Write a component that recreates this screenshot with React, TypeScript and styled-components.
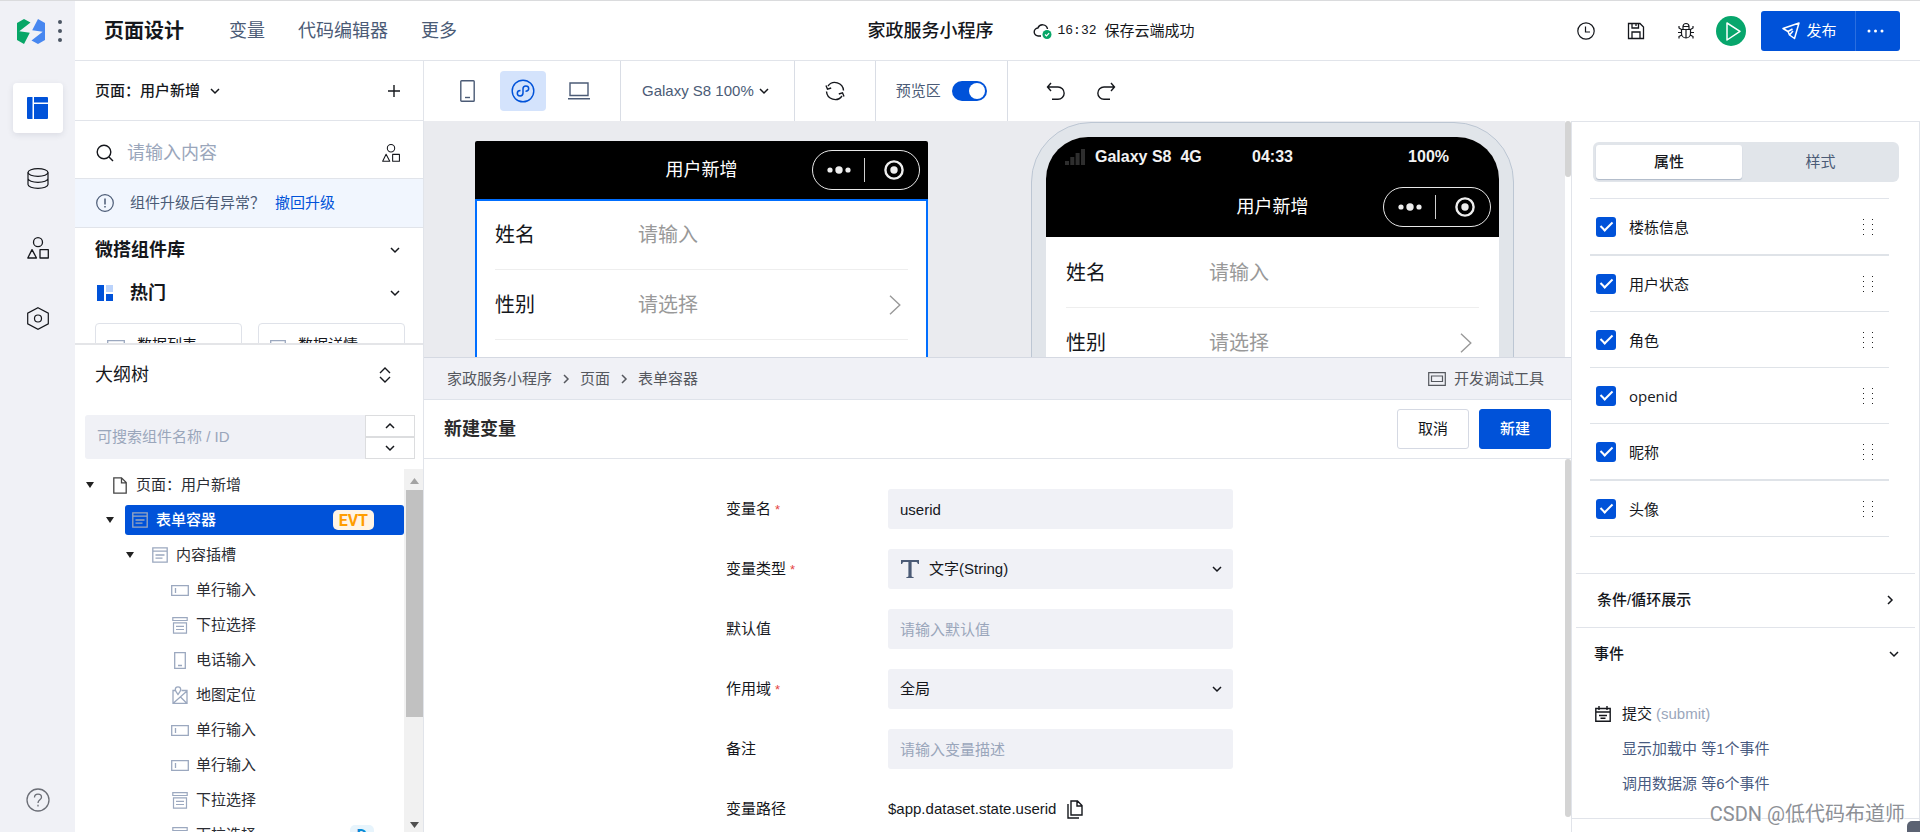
import React from "react";
import styled, { createGlobalStyle, css } from "styled-components";

const color = {
  primary: "#0052d9",
  ink: "#15171c",
  slate: "#4b5b76",
  muted: "#9aa6bb",
  line: "#e1e4ea",
  fill: "#f0f1f6",
  canvas: "#eaebef",
};

const GlobalStyle = createGlobalStyle`
  *, *::before, *::after { box-sizing: border-box; }
  html, body, #root { height: 100%; margin: 0; }
  body {
    font-family: "Liberation Sans", "Noto Sans CJK SC", sans-serif;
    font-size: 15px;
    line-height: 20px;
    color: ${color.ink};
    background: #fff;
    overflow: hidden;
  }
  button, input, select { font: inherit; color: inherit; margin: 0; }
  button { padding: 0; border: 0; background: none; cursor: pointer; }
  a { text-decoration: none; }
  ul { list-style: none; margin: 0; padding: 0; }
  h1, h2, h3, p { margin: 0; font: inherit; }
  svg { display: block; flex: none; }
`;

/* ---------- icons ---------- */

type IconProps = { w?: number; h?: number; box?: string; sw?: number; stroke?: string; children: React.ReactNode };
const Icon = ({ w = 18, h = w, box, sw = 1, stroke = "currentColor", children }: IconProps) => (
  <svg width={w} height={h} viewBox={box ?? `0 0 ${w} ${h}`} fill="none" stroke={stroke} strokeWidth={sw} aria-hidden="true">
    {children}
  </svg>
);

const chevronPaths = {
  down: "M2 4l4 4 4-4",
  up: "M2 8l4-4 4 4",
  right: "M4 2l4 4-4 4",
};
const Chevron = ({ dir = "down" }: { dir?: keyof typeof chevronPaths }) => (
  <Icon w={12} sw={1.5}><path d={chevronPaths[dir]} /></Icon>
);

const LogoIcon = () => (
  <svg width="28" height="25" viewBox="0 0 28 25" aria-hidden="true">
    <path d="M0 4L7 0l6.500 3.600L2.300 12.200 12.800 13.800 7 25 0 21z" fill="#07a667" />
    <path d="M28 21L21 25l-6.500-3.600L25.700 12.800 15.200 11.200 21 0l7 4z" fill="#4787f0" />
  </svg>
);
const LayoutIcon = () => (
  <svg width="21" height="22" viewBox="0 0 21 22" fill={color.primary} aria-hidden="true">
    <path d="M1 0h4.500v22H1a1 1 0 01-1-1V1a1 1 0 011-1zM7 0h13a1 1 0 011 1v4.500H7zM7 7h14v14a1 1 0 01-1 1H7z" />
  </svg>
);
const DatabaseIcon = () => (
  <Icon w={22} h={21} sw={1.2}>
    <ellipse cx="11" cy="4.500" rx="10" ry="3.800" />
    <path d="M1 4.500v12C1 18.600 5.500 20.300 11 20.300s10-1.700 10-3.800v-12M1 10.500c0 2.100 4.500 3.800 10 3.800s10-1.700 10-3.800" />
  </Icon>
);
const ShapesIcon = ({ size = 22 }: { size?: number }) => (
  <Icon w={size} box="0 0 22 22" sw={1.3}>
    <circle cx="11" cy="5.200" r="4.500" />
    <path d="M5 12.600L9.500 21H.8zM13 12.700h8.300V21H13z" strokeLinejoin="round" />
  </Icon>
);
const HexIcon = () => (
  <Icon w={22} h={23} sw={1.2}>
    <path d="M11 .8l10.300 5.400v10.600L11 22.200.7 16.800V6.200z" />
    <circle cx="11" cy="11.500" r="3.500" />
  </Icon>
);
const HelpIcon = () => (
  <Icon w={24} sw={1.3} stroke="#6b6e76">
    <circle cx="12" cy="12" r="11" />
    <path d="M8.500 9.500c0-2 1.500-3.300 3.500-3.300s3.500 1.300 3.500 3.100c0 2.500-3.500 2.700-3.500 5.700M12 16.800v1.700" />
  </Icon>
);
const SearchIcon = () => <Icon w={18} sw={1.4}><circle cx="8" cy="8" r="6.800" /><path d="M13 13l4 4" /></Icon>;
const PlusIcon = () => <Icon w={12} sw={1.4}><path d="M6 0v12M0 6h12" /></Icon>;
const InfoIcon = () => <Icon w={18} sw={1.2}><circle cx="9" cy="9" r="8.300" /><path d="M9 4.500v6M9 12v1.600" strokeWidth="1.500" /></Icon>;
const HotIcon = () => (
  <svg width="16" height="16" viewBox="0 0 16 16" aria-hidden="true">
    <path d="M0 0h7v16H0zM9 9h7v7H9z" fill={color.primary} /><path d="M9 0h7v7H9z" fill="#bbd3fb" />
  </svg>
);
const SortIcon = () => <Icon w={12} h={16} sw={1.4}><path d="M1 6l5-5 5 5M1 10l5 5 5-5" /></Icon>;
const CloudIcon = () => (
  <Icon w={20} h={18} sw={1.4}>
    <path d="M8 14H5.500a4 4 0 01-.6-8A5 5 0 0114.500 7" />
    <circle cx="14" cy="12.500" r="4.500" fill="#07a667" stroke="none" />
    <path d="M12 12.500l1.500 1.500 2.600-2.800" stroke="#fff" strokeWidth="1.200" />
  </Icon>
);
const ClockIcon = () => <Icon w={18} sw={1.2}><circle cx="9" cy="9" r="8.200" /><path d="M8.500 4.500V10H13" /></Icon>;
const SaveIcon = () => <Icon w={18} sw={1.3}><path d="M1.500 1.500H13L16.500 5v11.500h-15zM5 1.500V6h6.500V1.500M5 16.500V10h8v6.500M9 2v2" /></Icon>;
const BugIcon = () => (
  <Icon w={18} sw={1.2}>
    <path d="M4.500 7.500h9v4a4.500 4.500 0 01-9 0zM9 7.500V16M6 7V4.500a3 3 0 016 0V7M5.500 4.500h7M2 4v2l2.500 1.500M16 4v2l-2.500 1.500M1 10.500h3.500M17 10.500h-3.500M2 16.500v-2L4.700 13M16 16.500v-2L13.300 13" />
  </Icon>
);
const PlayIcon = () => <Icon w={30} sw={1.5} stroke="#fff"><path d="M11 7l13 8.300L11 24z" strokeLinejoin="round" /></Icon>;
const SendIcon = () => <Icon w={18} sw={1.5}><path d="M1 6.500L17 1l-4.500 15.500-5-3.500-1.500-3.500zM6 9.500l4.500-2.500M7.500 13L11 9" strokeLinejoin="round" /></Icon>;
const MoreIcon = () => (
  <svg width="17" height="4" viewBox="0 0 17 4" fill="currentColor" aria-hidden="true">
    <circle cx="2" cy="2" r="1.500" /><circle cx="8.500" cy="2" r="1.500" /><circle cx="15" cy="2" r="1.500" />
  </svg>
);
const PhoneIcon = () => <Icon w={15} h={22} sw={1.4}><rect x=".8" y=".8" width="13.400" height="20.400" rx=".8" /><path d="M5 17.500h5" /></Icon>;
const MiniIcon = () => (
  <Icon w={24} sw={1.4}>
    <circle cx="12" cy="12" r="10.800" />
    <path d="M9.500 11.500c-1.800 0-3.200 1.100-3.200 2.700 0 1.500 1.200 2.700 2.800 2.700 1.700 0 2.900-1.300 2.900-2.900V9.800c0-1.600 1.200-2.900 2.900-2.900 1.600 0 2.800 1.200 2.800 2.700 0 1.600-1.400 2.700-3.200 2.700" strokeWidth="1.500" />
  </Icon>
);
const LaptopIcon = () => <Icon w={22} h={18} sw={1.4}><path d="M2 1h18v12.500H2zM0 16.700h22" /></Icon>;
const RefreshIcon = () => (
  <Icon w={20} sw={1.4}>
    <path d="M3 5A8.600 8.600 0 0118.500 9.500M17 15A8.600 8.600 0 011.500 10.500M1 4.500l1.500 3.700 3.700-1.200M19 15.500l-1.500-3.700-3.700 1.200" />
  </Icon>
);
const UndoIcon = () => <Icon w={19} sw={1.4}><path d="M5 1L1.500 5 5 9M1.500 5H12a6 6 0 010 12.300H6" /></Icon>;
const RedoIcon = () => <Icon w={19} sw={1.4}><path d="M14 1l3.500 4L14 9M17.500 5H7a6 6 0 000 12.300h6" /></Icon>;
const BigChevron = () => <Icon w={12} h={20} sw={1.4} stroke="#999"><path d="M1 .8l9.800 9.200L1 19.200" /></Icon>;
const SignalIcon = () => (
  <svg width="20" height="16" viewBox="0 0 20 16" fill="#2e2e2e" aria-hidden="true">
    <path d="M0 12h4v4H0zM5.300 8h4v8h-4zM10.600 4h4v12h-4zM16 0h4v16h-4z" />
  </svg>
);
const DevIcon = () => <Icon w={18} h={14} sw={1.2}><path d="M.7.7h16.600v12.600H.7zM3.500 4h11v5.500h-11z" /></Icon>;
const TypeIcon = () => (
  <svg width="18" height="18" viewBox="0 0 18 18" fill={color.slate} aria-hidden="true">
    <path d="M0 0h18v4h-1.200c-.2-1.400-.8-2-2.300-2H10.600v14c0 .8.600 1 2 1v1H5.400v-1c1.400 0 2-.2 2-1V2H3.500C2 2 1.400 2.600 1.200 4H0z" />
  </svg>
);
const CopyIcon = () => <Icon w={16} h={19} sw={1.4}><path d="M4 1h6.500L15 5.500V15H4zM10 1v5h5M1 4v14h11" /></Icon>;
const SubmitIcon = () => <Icon w={16} sw={1.4}><path d="M.8 2.500h14.400v12.800H.8zM4 0v4M12 0v4M.8 6h14.400M4 9.500h8M5.500 12.300h5" /></Icon>;
const CaretIcon = () => (
  <svg width="8" height="6" viewBox="0 0 8 6" aria-hidden="true"><path d="M0 0h8L4 6z" fill="#222" /></svg>
);

const treeIcons = {
  page: <Icon w={14} h={17} sw={1.3} stroke="#444"><path d="M.8.8h7.700l4.700 4.700v10.700H.8zM8.500.8v5h4.700" /></Icon>,
  form: <Icon w={16} sw={1.3} stroke="#9ba8bf"><path d="M.8.8h14.400v14.400H.8zM.8 4.200h14.400M3.500 8h9M3.500 11.200h7" /></Icon>,
  input: <Icon w={18} h={11} sw={1.3} stroke="#9ba8bf"><path d="M.7.7h16.600v9.600H.7zM4.500 3v5" /></Icon>,
  select: <Icon w={16} h={17} sw={1.2} stroke="#9ba8bf"><path d="M.8.7h14.400v2.800H.8zM1.500 5.800h13v10.400h-13zM4 9.300h8M4 12.500h8" /></Icon>,
  tel: <Icon w={12} h={17} sw={1.3} stroke="#9ba8bf"><path d="M.7.7h10.600v15.600H.7zM4 13.500h4" /></Icon>,
  map: <Icon w={16} h={18} sw={1.3} stroke="#9ba8bf"><path d="M3 4.500H1v12.800h14V4.500H9.500M1.500 17L15 5M8.500 11l6 6M6 8.500C4.500 6.500 3.300 5.200 3.300 3.600a2.700 2.700 0 015.400 0C8.700 5.200 7.500 6.500 6 8.500z" /></Icon>,
};

/* ---------- shell ---------- */

const Shell = styled.div`
  display: flex;
  height: 100vh;
  border-top: 1px solid #dadbdd;
  overflow: hidden;
`;
const Rail = styled.nav`
  flex: 0 0 75px;
  display: flex;
  flex-direction: column;
  align-items: center;
  background: ${color.fill};
  padding-bottom: 20px;
`;
const Brand = styled.div`
  display: flex;
  align-items: center;
  gap: 13px;
  height: 60px;
  margin-bottom: 22px;
  padding-left: 4px;
`;
const BrandDots = styled.button`
  display: grid;
  gap: 5px;
  i { display: block; width: 4px; height: 4px; border-radius: 50%; background: #4b5563; }
`;
const RailButton = styled.button<{ $active?: boolean }>`
  display: grid;
  place-items: center;
  width: 50px;
  height: 50px;
  margin-bottom: 20px;
  border-radius: 4px;
  ${(p) => p.$active && css`background: #fff; box-shadow: 0 2px 6px rgba(30, 40, 70, 0.1);`}
`;
const Spacer = styled.div`flex: 1;`;
const Main = styled.div`
  flex: 1;
  min-width: 0;
  display: flex;
  flex-direction: column;
`;
const Header = styled.header`
  flex: 0 0 60px;
  display: flex;
  align-items: center;
  justify-content: space-between;
  padding: 0 20px 0 29px;
  border-bottom: 1px solid ${color.line};
`;
const TopNav = styled.nav`
  display: flex;
  align-items: center;
  gap: 33px;
  font-size: 18px;
`;
const PageTitle = styled.h1`
  font-size: 20px;
  font-weight: 700;
  margin-right: 12px;
`;
const NavLink = styled.a`color: ${color.slate};`;
const AppInfo = styled.div`
  display: flex;
  align-items: center;
  gap: 40px;
  padding-left: 28px;
`;
const AppName = styled.h2`
  font-size: 18px;
  font-weight: 500;
`;
const SaveState = styled.p`
  display: flex;
  align-items: center;
  gap: 4px;
  time { font-family: "Liberation Mono", monospace; font-size: 13px; margin-right: 4px; }
`;
const Actions = styled.div`
  display: flex;
  align-items: center;
  gap: 32px;
`;
const IconButton = styled.button`
  display: grid;
  place-items: center;
`;
const RunButton = styled(IconButton)`
  width: 30px;
  height: 30px;
  margin: 0 -17px 0 -11px;
  border-radius: 50%;
  background: #07a66c;
`;
const Publish = styled.div`
  display: flex;
  height: 40px;
  border-radius: 3px;
  background: ${color.primary};
  color: #fff;
  overflow: hidden;
`;
const PublishMain = styled.button`
  display: flex;
  align-items: center;
  justify-content: center;
  gap: 6px;
  width: 94px;
  padding-left: 3px;
`;
const PublishMore = styled.button`
  display: grid;
  place-items: center;
  width: 45px;
  padding-right: 6px;
  border-left: 1px solid #2a6ee0;
`;
const Body = styled.div`
  flex: 1;
  min-height: 0;
  display: flex;
`;

/* ---------- left panel ---------- */

const LeftPanel = styled.aside`
  flex: 0 0 349px;
  display: flex;
  flex-direction: column;
  min-height: 0;
  border-right: 1px solid ${color.line};
`;
const PageBar = styled.div`
  flex: 0 0 60px;
  display: flex;
  align-items: center;
  justify-content: space-between;
  padding: 0 23px 0 20px;
  border-bottom: 1px solid ${color.line};
`;
const SearchBar = styled(PageBar)`
  flex-basis: 58px;
  padding-top: 6px;
`;
const PagePicker = styled.button`
  display: flex;
  align-items: center;
  gap: 9px;
  font-weight: 500;
`;
const SearchLabel = styled.label`
  display: flex;
  align-items: center;
  gap: 13px;
  padding-left: 1px;
`;
const SearchInput = styled.input`
  width: 200px;
  padding: 0;
  border: 0;
  outline: 0;
  background: none;
  font-size: 18px;
  &::placeholder { color: ${color.muted}; opacity: 1; }
`;
const Notice = styled.p`
  flex: 0 0 49px;
  display: flex;
  align-items: center;
  padding-left: 21px;
  background: #f1f6fe;
  border-bottom: 1px solid ${color.line};
  color: ${color.slate};
  span { margin: 0 10px 0 16px; }
  a { color: ${color.primary}; }
`;
const Library = styled.section`
  flex: 0 0 117px;
  padding: 0 18px 0 20px;
  border-bottom: 2px solid #e4e5e8;
  overflow: hidden;
`;
const LibraryHead = styled.button`
  display: flex;
  align-items: center;
  justify-content: space-between;
  width: 100%;
  height: 43px;
  padding-right: 4px;
  font-size: 18px;
  font-weight: 700;
  span { display: flex; align-items: center; gap: 17px; padding-left: 2px; }
`;
const CardGrid = styled.div`
  display: grid;
  grid-template-columns: 1fr 1fr;
  gap: 16px;
  margin-top: 9px;
`;
const Card = styled.button`
  display: flex;
  align-items: center;
  gap: 12px;
  height: 44px;
  padding-left: 11px;
  border: 1px solid #dfe2e9;
  border-radius: 4px;
`;
const Outline = styled.section`
  flex: 1;
  min-height: 0;
  display: flex;
  flex-direction: column;
`;
const OutlineHead = styled.div`
  flex: 0 0 60px;
  display: flex;
  align-items: center;
  justify-content: space-between;
  padding: 0 32px 0 20px;
  font-size: 18px;
`;
const Finder = styled.div`
  flex: 0 0 44px;
  display: flex;
  margin: 10px 8px 10px 10px;
`;
const FinderInput = styled.input`
  flex: 1;
  min-width: 0;
  padding: 0 12px;
  border: 0;
  border-radius: 3px 0 0 3px;
  background: ${color.fill};
  outline: 0;
  &::placeholder { color: ${color.muted}; opacity: 1; }
`;
const Stepper = styled.div`
  flex: 0 0 50px;
  display: grid;
  grid-template-rows: 1fr 1fr;
`;
const StepButton = styled.button`
  display: grid;
  place-items: center;
  border: 1px solid #dcdddf;
`;
const TreeArea = styled.div`
  flex: 1;
  min-height: 0;
  display: flex;
  overflow: hidden;
`;
const Tree = styled.ul`
  flex: 1;
  display: flex;
  flex-direction: column;
  gap: 5px;
  padding-top: 1px;
`;
const TreeRow = styled.li<{ $depth: number }>`
  flex: 0 0 30px;
  display: flex;
  align-items: center;
  padding-left: ${(p) => 11 + p.$depth * 20}px;
  color: #2b2d33;
`;
const Twist = styled.span`
  width: 8px;
  margin-right: 11px;
`;
const Node = styled.span<{ $selected?: boolean }>`
  flex: 1;
  display: flex;
  align-items: center;
  height: 30px;
  padding: 0 30px 0 3px;
  border-radius: 3px;
  ${(p) => p.$selected && css`background: ${color.primary}; color: #fff; font-weight: 500;`}
`;
const NodeIcon = styled.span`
  display: grid;
  place-items: center;
  width: 24px;
  margin-right: 4px;
`;
const Badge = styled.b<{ $tone: "evt" | "data" }>`
  margin-left: auto;
  height: 20px;
  padding: 1px ${(p) => (p.$tone === "evt" ? 6 : 7)}px 0;
  border-radius: 5px;
  font: 700 16px/20px Roboto, sans-serif;
  background: ${(p) => (p.$tone === "evt" ? "#fff4e5" : "#e7f4fc")};
  color: ${(p) => (p.$tone === "evt" ? "#ff9d00" : "#0a8bd6")};
`;
const TreeScroll = styled.div`
  flex: 0 0 19px;
  display: flex;
  flex-direction: column;
  align-items: center;
  padding: 9px 0 4px 2px;
  background: #f1f1f1;
`;
const TreeThumb = styled.div`
  width: 17px;
  height: 227px;
  margin: 6px 0 auto;
  background: #c1c1c1;
`;

/* ---------- toolbar and canvas ---------- */

const Workspace = styled.div`
  flex: 1;
  min-width: 0;
  display: flex;
  flex-direction: column;
`;
const Toolbar = styled.div`
  flex: 0 0 60px;
  display: flex;
`;
const ToolGroup = styled.div<{ $left: number; $right: number; $gap?: number; $last?: boolean }>`
  display: flex;
  align-items: center;
  gap: ${(p) => p.$gap ?? 10}px;
  padding: 0 ${(p) => p.$right}px 0 ${(p) => p.$left}px;
  color: ${color.slate};
  border-right: ${(p) => (p.$last ? "0" : "1px solid #d9dde5")};
`;
const DeviceButton = styled.button<{ $active?: boolean }>`
  display: grid;
  place-items: center;
  width: 46px;
  height: 40px;
  border-radius: 4px;
  ${(p) => p.$active && css`background: #d4e3fc; color: ${color.primary};`}
`;
const DevicePicker = styled.button`
  display: flex;
  align-items: center;
  gap: 4px;
  svg { color: ${color.ink}; }
`;
const DarkButton = styled(IconButton)`color: ${color.ink};`;
const SwitchLabel = styled.label`
  display: flex;
  align-items: center;
  gap: 11px;
`;
const Switch = styled.input`
  appearance: none;
  width: 35px;
  height: 20px;
  border-radius: 10px;
  background: ${color.primary};
  display: flex;
  align-items: center;
  justify-content: flex-end;
  padding-right: 2px;
  &::after { content: ""; width: 16px; height: 16px; border-radius: 50%; background: #fff; }
`;
const Work = styled.div`
  flex: 1;
  min-height: 0;
  display: flex;
`;
const Center = styled.main`
  flex: 1;
  min-width: 0;
  display: flex;
  flex-direction: column;
`;
const CanvasRow = styled.div`
  flex: 0 0 236px;
  display: flex;
  overflow: hidden;
`;
const Canvas = styled.div`
  flex: 1;
  display: flex;
  align-items: flex-start;
  justify-content: space-between;
  padding: 0 51px;
  background: ${color.canvas};
`;
const Track = styled.div`
  flex: 0 0 6px;
  background: #fff;
`;
const Thumb = styled.div<{ $h: string }>`
  height: ${(p) => p.$h};
  border-radius: 3px;
  background: #d4d4d4;
`;
const EditScreen = styled.div`
  width: 453px;
  margin-top: 20px;
  border-radius: 2px 2px 0 0;
  overflow: hidden;
  background: #fff;
`;
const Bezel = styled.div`
  margin-top: 1px;
  padding: 14px;
  border: 1px solid #bcc6d3;
  border-radius: 60px;
  background: #e1e5ea;
`;
const Screen = styled.div`
  width: 453px;
  border-radius: 42px;
  background: #fff;
  overflow: hidden;
`;
const StatusBar = styled.div`
  display: grid;
  grid-template-columns: 1fr auto 1fr;
  align-items: center;
  height: 40px;
  background: #000;
  color: #f2f2f2;
  font-size: 16px;
  font-weight: 700;
  span:first-child { display: flex; align-items: center; gap: 10px; padding-left: 19px; }
  span:last-child { text-align: right; padding-right: 50px; }
`;
const AppBar = styled.div<{ $h: number }>`
  display: grid;
  grid-template-columns: 1fr auto 1fr;
  align-items: center;
  height: ${(p) => p.$h}px;
  background: #000;
  color: #fff;
  font-size: 18px;
  h3 { grid-column: 2; }
`;
const Capsule = styled.div`
  justify-self: end;
  display: flex;
  align-items: center;
  width: 108px;
  height: 40px;
  margin-right: 8px;
  border: 1px solid #e8e8e8;
  border-radius: 20px;
`;
const CapsuleButton = styled.button`
  flex: 1;
  display: grid;
  place-items: center;
  & + & { height: 24px; padding-left: 3px; border-left: 1px solid #cfcfcf; }
`;
const MobileForm = styled.div<{ $focused?: boolean }>`
  height: 220px;
  padding: 1px 20px 0;
  ${(p) => p.$focused && css`outline: 2px solid #006eff; outline-offset: -2px;`}
`;
const MobileRow = styled.label`
  display: flex;
  align-items: center;
  height: 70px;
  padding-right: 7px;
  border-bottom: 1px solid #eee;
  font-size: 20px;
  line-height: 28px;
  > span { flex: 0 0 143px; }
`;
const MobileInput = styled.input`
  flex: 1;
  min-width: 0;
  padding: 0;
  border: 0;
  outline: 0;
  background: none;
  &::placeholder { color: #999; opacity: 1; }
`;

const MobileFields = ({ id, focused }: { id: string; focused?: boolean }) => (
  <MobileForm $focused={focused}>
    <MobileRow htmlFor={`${id}-name`}>
      <span>姓名</span>
      <MobileInput id={`${id}-name`} placeholder="请输入" />
    </MobileRow>
    <MobileRow htmlFor={`${id}-sex`}>
      <span>性别</span>
      <MobileInput id={`${id}-sex`} placeholder="请选择" readOnly />
      <BigChevron />
    </MobileRow>
  </MobileForm>
);

const MobileBar = ({ h }: { h: number }) => (
  <AppBar $h={h}>
    <h3>用户新增</h3>
    <Capsule>
      <CapsuleButton aria-label="菜单">
        <svg width="24" height="8" viewBox="0 0 24 8" fill="#eee">
          <circle cx="3" cy="4" r="2.600" /><circle cx="12" cy="4" r="3.700" /><circle cx="21" cy="4" r="2.600" />
        </svg>
      </CapsuleButton>
      <CapsuleButton aria-label="关闭">
        <svg width="20" height="20" viewBox="0 0 20 20" fill="#eee">
          <circle cx="10" cy="10" r="8.600" fill="none" stroke="#eee" strokeWidth="2.400" /><circle cx="10" cy="10" r="3.700" />
        </svg>
      </CapsuleButton>
    </Capsule>
  </AppBar>
);

/* ---------- variable editor ---------- */

const CrumbBar = styled.div`
  flex: 0 0 43px;
  display: flex;
  align-items: center;
  justify-content: space-between;
  padding: 0 27px 0 23px;
  background: ${color.fill};
  border-top: 1px solid #d5d9e2;
  border-bottom: 1px solid #dfe3ea;
  color: #55585e;
`;
const Crumbs = styled.nav`
  display: flex;
  align-items: center;
  gap: 8px;
  a { color: inherit; }
`;
const DevTools = styled.button`
  display: flex;
  align-items: center;
  gap: 8px;
`;
const EditorHead = styled.div`
  flex: 0 0 59px;
  display: flex;
  align-items: center;
  gap: 10px;
  padding: 0 20px;
  border-bottom: 1px solid ${color.line};
  h2 { flex: 1; font-size: 18px; font-weight: 700; color: #2b2b2b; }
`;
const Button = styled.button<{ $primary?: boolean }>`
  width: 72px;
  height: 40px;
  border: 1px solid ${(p) => (p.$primary ? color.primary : "#d5d9e3")};
  border-radius: 3px;
  background: ${(p) => (p.$primary ? color.primary : "#fff")};
  color: ${(p) => (p.$primary ? "#fff" : color.ink)};
  font-weight: ${(p) => (p.$primary ? 500 : 400)};
`;
const EditorRow = styled.div`
  flex: 1;
  min-height: 0;
  display: flex;
  overflow: hidden;
`;
const Form = styled.form`
  flex: 1;
  display: flex;
  flex-direction: column;
  align-items: center;
  gap: 20px;
  padding-top: 30px;
`;
const Field = styled.div`
  flex: 0 0 40px;
  display: grid;
  grid-template-columns: 162px 345px 30px;
  align-items: center;
  em { color: #e54545; font: normal 13px/20px "Liberation Sans", sans-serif; margin-left: 4px; }
`;
const TextInput = styled.input`
  width: 100%;
  height: 40px;
  padding: 0 12px;
  border: 0;
  border-radius: 3px;
  background: ${color.fill};
  outline: 0;
  &::placeholder { color: ${color.muted}; opacity: 1; }
`;
const SelectBox = styled.div`
  display: grid;
  align-items: center;
  > * { grid-area: 1 / 1; }
  > svg { pointer-events: none; z-index: 1; }
  > svg:last-child { justify-self: end; margin-right: 10px; }
  > svg:first-child { margin-left: 13px; }
`;
const Select = styled.select<{ $icon?: boolean }>`
  appearance: none;
  width: 100%;
  height: 40px;
  padding: 0 30px 0 ${(p) => (p.$icon ? 41 : 12)}px;
  border: 0;
  border-radius: 3px;
  background: ${color.fill};
  outline: 0;
`;
const PathValue = styled.output`
  display: flex;
  align-items: center;
  gap: 11px;
`;

/* ---------- property panel ---------- */

const Props = styled.aside`
  flex: 0 0 349px;
  display: flex;
  flex-direction: column;
  border: solid ${color.line};
  border-width: 1px 1px 0 1px;
  overflow: hidden;
`;
const Tabs = styled.div`
  flex: 0 0 40px;
  display: grid;
  grid-template-columns: 146px 1fr;
  margin: 20px 20px 16px 21px;
  padding: 3px 0 3px 3px;
  border-radius: 6px;
  background: #e1e5ea;
`;
const Tab = styled.button<{ $active?: boolean }>`
  color: ${color.slate};
  ${(p) => p.$active && css`
    border-radius: 3px;
    background: #fff;
    color: ${color.ink};
    font-weight: 500;
    box-shadow: 0 1px 1px #aeb8c8;
  `}
`;
const FieldList = styled.ul`
  margin: 0 30px 36px 18px;
  border-top: 1px solid ${color.line};
`;
const FieldRow = styled.li<{ $thick?: boolean }>`
  display: flex;
  align-items: center;
  justify-content: space-between;
  height: ${(p) => (p.$thick ? 57 : 56)}px;
  padding: 0 15px 0 6px;
  border-bottom: ${(p) => (p.$thick ? 2 : 1)}px solid #dfe3e8;
  label { display: flex; align-items: center; gap: 13px; font-family: "Open Sans", "Noto Sans CJK SC", sans-serif; }
`;
const Check = styled.input`
  appearance: none;
  width: 20px;
  height: 20px;
  border-radius: 3px;
  background: ${color.primary};
  display: grid;
  place-items: center;
  &::after {
    content: "";
    width: 7px;
    height: 12px;
    margin-bottom: 4px;
    border: solid #fff;
    border-width: 0 2px 2px 0;
    transform: rotate(45deg);
  }
`;
const DragIcon = () => (
  <svg width="11" height="16" viewBox="0 0 11 16" fill="#222" aria-hidden="true">
    {[0, 5, 10, 15].map((y) => <path key={y} d={`M0 ${y}h1v1H0zM9 ${y}h1v1H9z`} />)}
  </svg>
);
const Section = styled.section`
  margin: 0 4px;
  border-top: 1px solid ${color.line};
`;
const SectionHead = styled.button<{ $inset?: boolean }>`
  display: flex;
  align-items: center;
  justify-content: space-between;
  width: 100%;
  height: 53px;
  padding: ${(p) => (p.$inset ? "0 19px 2px 21px" : "0 15px 2px 18px")};
  font-weight: 500;
`;
const EventTitle = styled.p`
  display: flex;
  align-items: center;
  height: 35px;
  margin-top: 15px;
  padding-left: 19px;
  span { margin: 0 4px 0 11px; }
  small { font-size: 15px; color: ${color.muted}; }
`;
const EventLink = styled.a`
  display: flex;
  align-items: center;
  height: 35px;
  padding-left: 46px;
  color: #485a80;
`;
const PanelEnd = styled.div`
  margin-top: 17px;
  border-top: 1px solid ${color.line};
`;
const Watermark = styled.div`
  position: absolute;
  right: 15px;
  bottom: 4px;
  font-family: Roboto, "Noto Sans CJK SC", sans-serif;
  font-size: 20px;
  line-height: 28px;
  color: #8d9096;
  text-shadow: 1px 1px 0 #fff;
`;
const Corner = styled.div`
  position: absolute;
  right: 0;
  bottom: 0;
  width: 13px;
  height: 11px;
  border-radius: 5px 0 0 0;
  background: #5b6272;
`;

/* ---------- data ---------- */

type TreeItem = { depth: number; icon: keyof typeof treeIcons; label: string; open?: boolean; selected?: boolean; badge?: [string, "evt" | "data"] };
const tree: TreeItem[] = [
  { depth: 0, icon: "page", label: "页面：用户新增", open: true },
  { depth: 1, icon: "form", label: "表单容器", open: true, selected: true, badge: ["EVT", "evt"] },
  { depth: 2, icon: "form", label: "内容插槽", open: true },
  { depth: 3, icon: "input", label: "单行输入" },
  { depth: 3, icon: "select", label: "下拉选择" },
  { depth: 3, icon: "tel", label: "电话输入" },
  { depth: 3, icon: "map", label: "地图定位" },
  { depth: 3, icon: "input", label: "单行输入" },
  { depth: 3, icon: "input", label: "单行输入" },
  { depth: 3, icon: "select", label: "下拉选择" },
  { depth: 3, icon: "select", label: "下拉选择", badge: ["D", "data"] },
];
const formFields = [
  { label: "楼栋信息", thick: true },
  { label: "用户状态" },
  { label: "角色" },
  { label: "openid" },
  { label: "昵称", thick: true },
  { label: "头像" },
];

export default function App() {
  return (
    <>
      <GlobalStyle />
      <Shell>
        <Rail>
          <Brand>
            <LogoIcon />
            <BrandDots aria-label="菜单"><i /><i /><i /></BrandDots>
          </Brand>
          <RailButton $active aria-label="页面设计"><LayoutIcon /></RailButton>
          <RailButton aria-label="数据源"><DatabaseIcon /></RailButton>
          <RailButton aria-label="组件"><ShapesIcon /></RailButton>
          <RailButton aria-label="设置"><HexIcon /></RailButton>
          <Spacer />
          <IconButton aria-label="帮助"><HelpIcon /></IconButton>
        </Rail>

        <Main>
          <Header>
            <TopNav>
              <PageTitle>页面设计</PageTitle>
              <NavLink href="#vars">变量</NavLink>
              <NavLink href="#code">代码编辑器</NavLink>
              <NavLink href="#more">更多</NavLink>
            </TopNav>
            <AppInfo>
              <AppName>家政服务小程序</AppName>
              <SaveState><CloudIcon /><time>16:32</time>保存云端成功</SaveState>
            </AppInfo>
            <Actions>
              <IconButton aria-label="历史"><ClockIcon /></IconButton>
              <IconButton aria-label="保存"><SaveIcon /></IconButton>
              <IconButton aria-label="调试"><BugIcon /></IconButton>
              <RunButton aria-label="预览"><PlayIcon /></RunButton>
              <Publish>
                <PublishMain><SendIcon />发布</PublishMain>
                <PublishMore aria-label="更多发布选项"><MoreIcon /></PublishMore>
              </Publish>
            </Actions>
          </Header>

          <Body>
            <LeftPanel>
              <PageBar>
                <PagePicker>页面：用户新增<Chevron /></PagePicker>
                <IconButton aria-label="新建页面"><PlusIcon /></IconButton>
              </PageBar>
              <SearchBar>
                <SearchLabel>
                  <SearchIcon />
                  <SearchInput placeholder="请输入内容" aria-label="搜索组件" />
                </SearchLabel>
                <IconButton aria-label="组件筛选"><ShapesIcon size={18} /></IconButton>
              </SearchBar>
              <Notice><InfoIcon /><span>组件升级后有异常？</span><a href="#rollback">撤回升级</a></Notice>
              <Library>
                <LibraryHead>微搭组件库<Chevron /></LibraryHead>
                <LibraryHead><span><HotIcon />热门</span><Chevron /></LibraryHead>
                <CardGrid>
                  <Card>
                    <Icon w={18} h={11} sw={1.3} stroke="#9ba8bf"><path d="M.7.7h16.600v9.600H.7z" /></Icon>
                    数据列表
                  </Card>
                  <Card>
                    <Icon w={16} h={11} sw={1.3} stroke="#9ba8bf"><path d="M.7.7h14.600v9.600H.7zM8 3v5" /></Icon>
                    数据详情
                  </Card>
                </CardGrid>
              </Library>
              <Outline>
                <OutlineHead>大纲树<IconButton aria-label="展开"><SortIcon /></IconButton></OutlineHead>
                <Finder>
                  <FinderInput placeholder="可搜索组件名称 / ID" aria-label="搜索大纲树" />
                  <Stepper>
                    <StepButton aria-label="上一个"><Chevron dir="up" /></StepButton>
                    <StepButton aria-label="下一个"><Chevron /></StepButton>
                  </Stepper>
                </Finder>
                <TreeArea>
                  <Tree>
                    {tree.map((item, i) => (
                      <TreeRow key={i} $depth={item.depth}>
                        <Twist>{item.open && <CaretIcon />}</Twist>
                        <Node $selected={item.selected}>
                          <NodeIcon>{treeIcons[item.icon]}</NodeIcon>
                          {item.label}
                          {item.badge && <Badge $tone={item.badge[1]}>{item.badge[0]}</Badge>}
                        </Node>
                      </TreeRow>
                    ))}
                  </Tree>
                  <TreeScroll>
                    <svg width="9" height="6" viewBox="0 0 9 6"><path d="M4.500 0L9 6H0z" fill="#a3a3a3" /></svg>
                    <TreeThumb />
                    <svg width="9" height="6" viewBox="0 0 9 6"><path d="M4.500 6L9 0H0z" fill="#505050" /></svg>
                  </TreeScroll>
                </TreeArea>
              </Outline>
            </LeftPanel>

            <Workspace>
              <Toolbar>
                <ToolGroup $left={20} $right={18}>
                  <DeviceButton aria-label="手机"><PhoneIcon /></DeviceButton>
                  <DeviceButton $active aria-label="小程序"><MiniIcon /></DeviceButton>
                  <DeviceButton aria-label="电脑"><LaptopIcon /></DeviceButton>
                </ToolGroup>
                <ToolGroup $left={21} $right={24}><DevicePicker>Galaxy S8 100%<Chevron /></DevicePicker></ToolGroup>
                <ToolGroup $left={30} $right={30}><DarkButton aria-label="刷新"><RefreshIcon /></DarkButton></ToolGroup>
                <ToolGroup $left={20} $right={20}>
                  <SwitchLabel>预览区<Switch type="checkbox" role="switch" defaultChecked /></SwitchLabel>
                </ToolGroup>
                <ToolGroup $left={38} $right={38} $gap={32} $last>
                  <DarkButton aria-label="撤销"><UndoIcon /></DarkButton>
                  <DarkButton aria-label="重做"><RedoIcon /></DarkButton>
                </ToolGroup>
              </Toolbar>

              <Work>
                <Center>
                  <CanvasRow>
                    <Canvas>
                      <EditScreen>
                        <MobileBar h={58} />
                        <MobileFields id="edit" focused />
                      </EditScreen>
                      <Bezel>
                        <Screen>
                          <StatusBar>
                            <span><SignalIcon />Galaxy S8&nbsp; 4G</span>
                            <span>04:33</span>
                            <span>100%</span>
                          </StatusBar>
                          <MobileBar h={60} />
                          <MobileFields id="preview" />
                        </Screen>
                      </Bezel>
                    </Canvas>
                    <Track><Thumb $h="56px" /></Track>
                  </CanvasRow>

                  <CrumbBar>
                    <Crumbs>
                      <a href="#app">家政服务小程序</a><Chevron dir="right" />
                      <a href="#page">页面</a><Chevron dir="right" />
                      <a href="#form">表单容器</a>
                    </Crumbs>
                    <DevTools><DevIcon />开发调试工具</DevTools>
                  </CrumbBar>

                  <EditorHead>
                    <h2>新建变量</h2>
                    <Button>取消</Button>
                    <Button $primary>新建</Button>
                  </EditorHead>

                  <EditorRow>
                    <Form>
                      <Field>
                        <label htmlFor="var-name">变量名<em>*</em></label>
                        <TextInput id="var-name" defaultValue="userid" />
                      </Field>
                      <Field>
                        <label htmlFor="var-type">变量类型<em>*</em></label>
                        <SelectBox>
                          <TypeIcon />
                          <Select id="var-type" $icon><option>文字(String)</option></Select>
                          <Chevron />
                        </SelectBox>
                      </Field>
                      <Field>
                        <label htmlFor="var-default">默认值</label>
                        <TextInput id="var-default" placeholder="请输入默认值" />
                      </Field>
                      <Field>
                        <label htmlFor="var-scope">作用域<em>*</em></label>
                        <SelectBox>
                          <Select id="var-scope"><option>全局</option></Select>
                          <Chevron />
                        </SelectBox>
                      </Field>
                      <Field>
                        <label htmlFor="var-note">备注</label>
                        <TextInput id="var-note" placeholder="请输入变量描述" />
                      </Field>
                      <Field>
                        <label htmlFor="var-path">变量路径</label>
                        <PathValue id="var-path">
                          $app.dataset.state.userid
                          <IconButton type="button" aria-label="复制"><CopyIcon /></IconButton>
                        </PathValue>
                      </Field>
                    </Form>
                    <Track><Thumb $h="calc(100% - 15px)" /></Track>
                  </EditorRow>
                </Center>

                <Props>
                  <Tabs role="tablist">
                    <Tab $active role="tab" aria-selected="true">属性</Tab>
                    <Tab role="tab" aria-selected="false">样式</Tab>
                  </Tabs>
                  <FieldList>
                    {formFields.map((f) => (
                      <FieldRow key={f.label} $thick={f.thick}>
                        <label><Check type="checkbox" defaultChecked />{f.label}</label>
                        <DragIcon />
                      </FieldRow>
                    ))}
                  </FieldList>
                  <Section>
                    <SectionHead $inset>条件/循环展示<Chevron dir="right" /></SectionHead>
                  </Section>
                  <Section>
                    <SectionHead>事件<Chevron /></SectionHead>
                    <EventTitle><SubmitIcon /><span>提交</span><small>(submit)</small></EventTitle>
                    <EventLink href="#loading">显示加载中 等1个事件</EventLink>
                    <EventLink href="#source">调用数据源 等6个事件</EventLink>
                  </Section>
                  <PanelEnd />
                </Props>
              </Work>
            </Workspace>
          </Body>
        </Main>
      </Shell>
      <Watermark>CSDN @低代码布道师</Watermark>
      <Corner />
    </>
  );
}
